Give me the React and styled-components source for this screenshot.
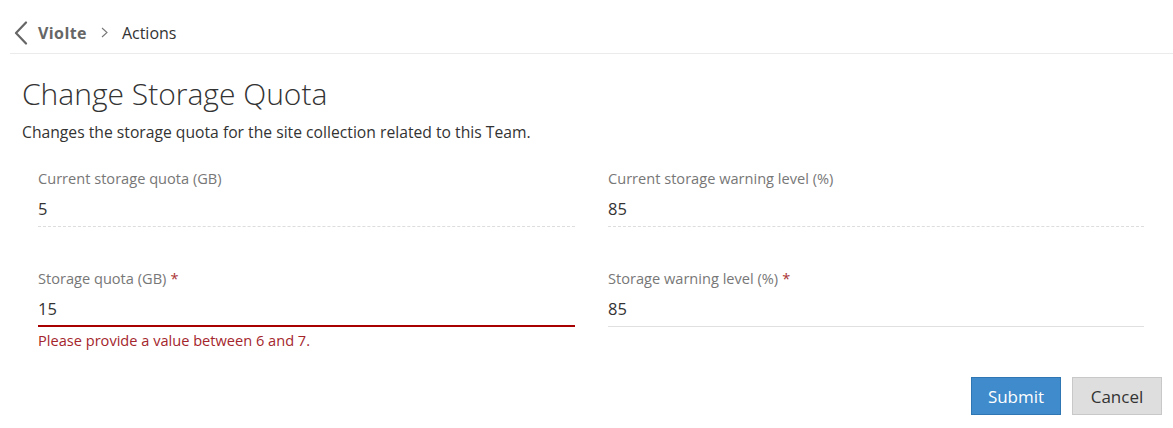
import React from "react";
import styled, { createGlobalStyle } from "styled-components";

const Global = createGlobalStyle`
  html, body { margin: 0; padding: 0; background: #fff; }
  body { font-family: "Open Sans", "Liberation Sans", sans-serif; color: #333; }
  * { box-sizing: border-box; }
`;

const Page = styled.div`
  width: 1173px;
`;

const Header = styled.header`
  display: flex;
  align-items: center;
  height: 54px;
  margin-left: 10px;
  padding: 12px 0 0 4px;
  border-bottom: 1px solid #ebebeb;
`;

const BackButton = styled.button`
  display: flex;
  align-items: center;
  justify-content: center;
  background: none;
  border: 0;
  padding: 0;
  margin-right: 10px;
  width: 14px;
  height: 24px;
  cursor: pointer;
`;

const Crumb = styled.span`
  font-size: 16px;
  font-weight: ${(p) => (p.$bold ? 700 : 400)};
  letter-spacing: ${(p) => (p.$bold ? "0.4px" : "0")};
  color: ${(p) => (p.$bold ? "#666" : "#333")};
`;

const Separator = styled.span`
  display: flex;
  align-items: center;
  margin: 0 14px 0 14px;
`;

const Content = styled.main`
  padding: 22px 13px 0 22px;
`;

const Title = styled.h1`
  margin: 0;
  font-size: 30px;
  line-height: 36px;
  font-weight: 300;
  color: #333;
`;

const Description = styled.p`
  margin: 9px 0 0 0;
  font-size: 15.7px;
  line-height: 22px;
  color: #333;
`;

const FormGrid = styled.div`
  display: grid;
  grid-template-columns: 1fr 1fr;
  row-gap: 41px;
  margin-top: 25px;
  width: 1138px;
`;

const Field = styled.div`
  padding: 0 16px 0 16px;
  &:nth-child(2n) { padding: 0 16px 0 17px; }
`;

const Label = styled.div`
  font-size: 14.6px;
  line-height: 20px;
  color: #777;
`;

const Required = styled.span`
  color: #a33;
  margin-left: 4px;
`;

const Value = styled.div`
  margin-top: 9px;
  font-size: 16.5px;
  line-height: 24px;
  color: #333;
  padding-bottom: ${(p) => (p.$variant === "error" ? "4px" : "5px")};
  border-bottom: ${(p) =>
    p.$variant === "readonly"
      ? "1px dashed #ddd"
      : p.$variant === "error"
      ? "2px solid #a80000"
      : "1px solid #e0e0e0"};
`;

const ErrorText = styled.div`
  margin-top: 3px;
  font-size: 14.6px;
  line-height: 20px;
  color: #a4262c;
`;

const Actions = styled.div`
  display: flex;
  justify-content: flex-end;
  gap: 11px;
  margin-top: 27px;
  width: 1140px;
`;

const Button = styled.button`
  width: 90px;
  height: 38px;
  font-family: inherit;
  font-size: 17px;
  border-radius: 0;
  cursor: pointer;
  color: ${(p) => (p.$primary ? "#fff" : "#333")};
  background: ${(p) => (p.$primary ? "#3f8bcb" : "#dedede")};
  border: 1px solid ${(p) => (p.$primary ? "#2f76b5" : "#c8c8c8")};
`;

export default function App() {
  return (
    <Page>
      <Global />
      <Header>
        <BackButton aria-label="Back">
          <svg width="14" height="24" viewBox="0 0 14 24">
            <path d="M12 1.5 L2 12 L12 22.5" fill="none" stroke="#666" strokeWidth="2.2" strokeLinecap="round" strokeLinejoin="round" />
          </svg>
        </BackButton>
        <Crumb $bold>Violte</Crumb>
        <Separator>
          <svg width="7" height="11" viewBox="0 0 7 11">
            <path d="M1 1 L6 5.5 L1 10" fill="none" stroke="#777" strokeWidth="1.1" />
          </svg>
        </Separator>
        <Crumb>Actions</Crumb>
      </Header>
      <Content>
        <Title>Change Storage Quota</Title>
        <Description>Changes the storage quota for the site collection related to this Team.</Description>
        <FormGrid>
          <Field>
            <Label>Current storage quota (GB)</Label>
            <Value $variant="readonly">5</Value>
          </Field>
          <Field>
            <Label>Current storage warning level (%)</Label>
            <Value $variant="readonly">85</Value>
          </Field>
          <Field>
            <Label>Storage quota (GB)<Required>*</Required></Label>
            <Value $variant="error">15</Value>
            <ErrorText>Please provide a value between 6 and 7.</ErrorText>
          </Field>
          <Field>
            <Label>Storage warning level (%)<Required>*</Required></Label>
            <Value $variant="input">85</Value>
          </Field>
        </FormGrid>
        <Actions>
          <Button $primary>Submit</Button>
          <Button>Cancel</Button>
        </Actions>
      </Content>
    </Page>
  );
}
